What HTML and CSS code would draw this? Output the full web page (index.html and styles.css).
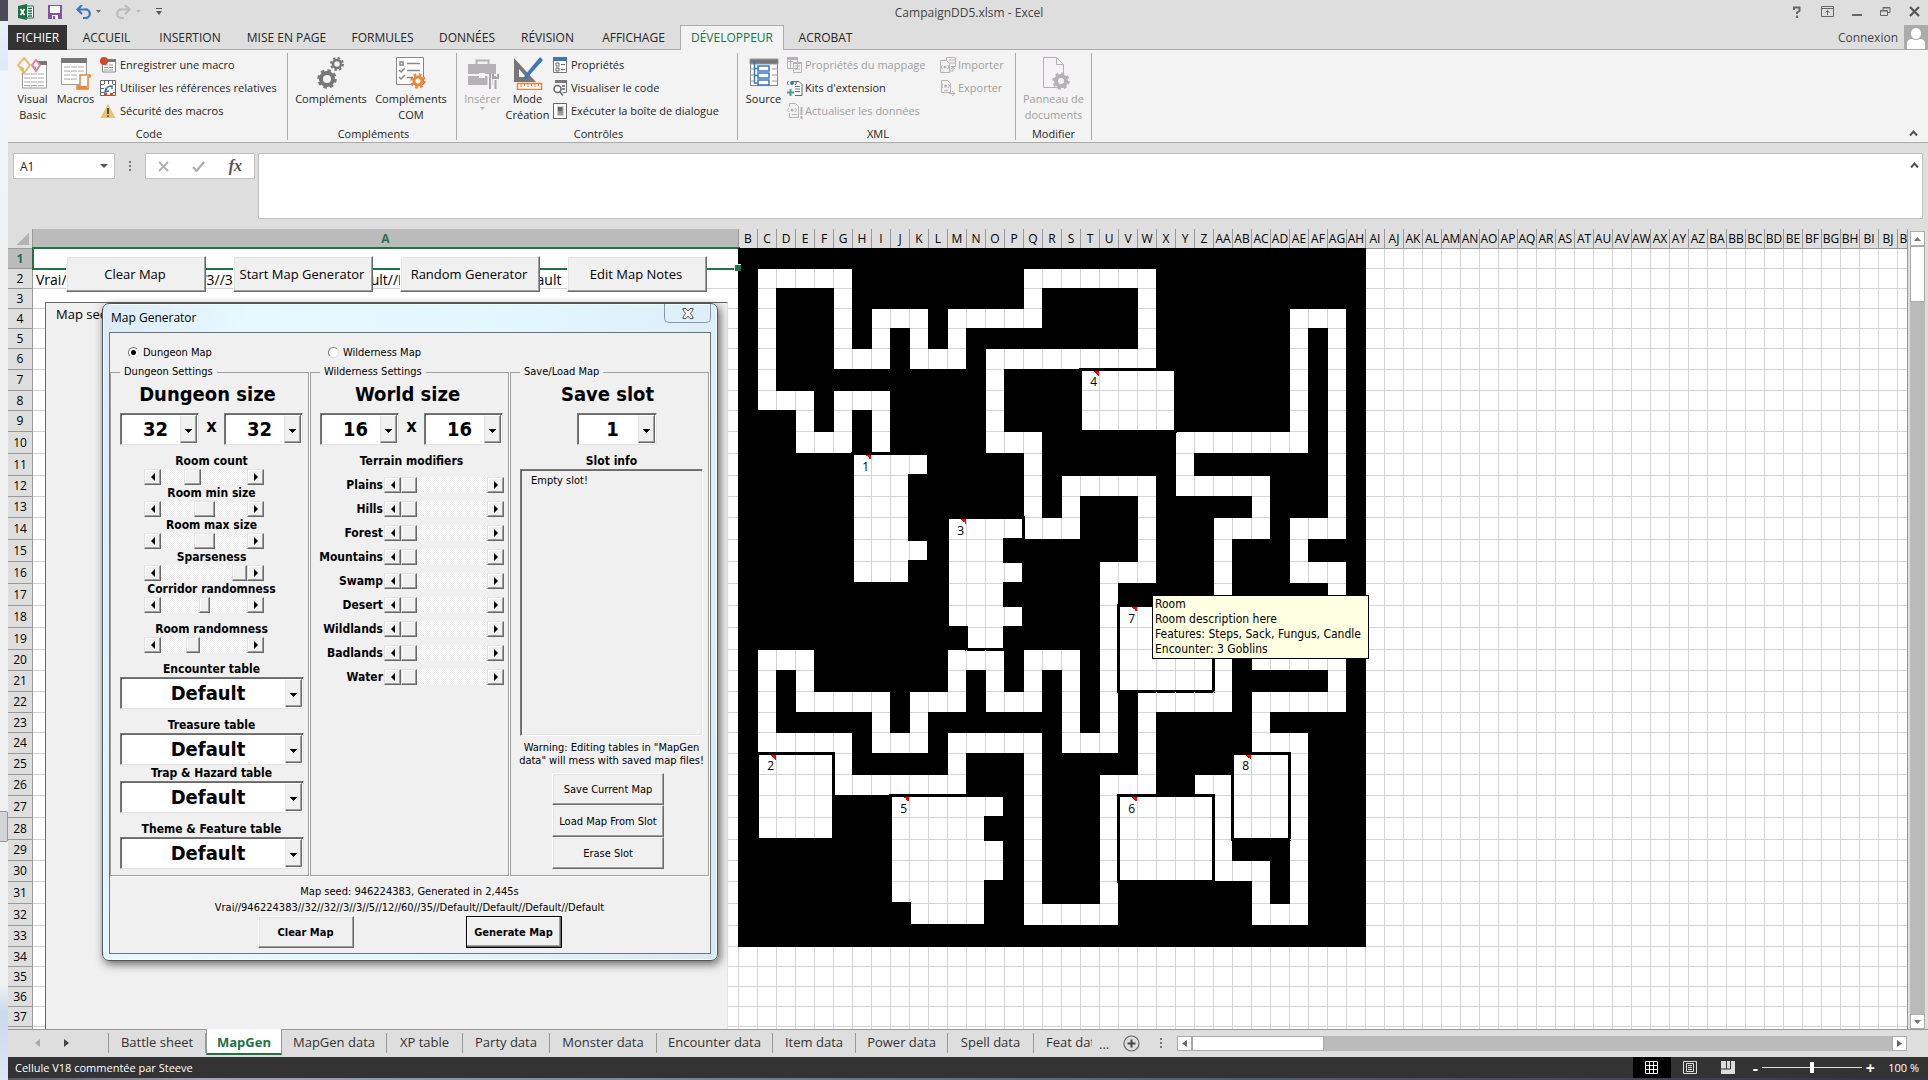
FILE: index.html
```html
<!DOCTYPE html>
<html lang="fr">

<head>
    <meta charset="UTF-8">
    <meta name="viewport" content="width=device-width, initial-scale=1.0">
    <title>CampaignDD5.xlsm - Excel</title>
    <link rel="stylesheet" href="styles.css">
</head>

<body>
    <div class="desktop-edge"><i class="edge-thumb"></i></div>
    <div class="excel">
        <header class="title-bar">
            <div class="quick-access">
                <svg width="16" height="16" viewBox="0 0 16 16"><path d="M0 2l9-2v16l-9-2z" fill="#1e7145"/><path d="M9 2h6.500v12H9" fill="#fff" stroke="#1e7145"/><path d="M10 4.500h4M10 7h4M10 9.500h4M10 12h4" stroke="#1e7145" stroke-width="1.400"/><path d="M2.500 5l4 6M6.500 5l-4 6" stroke="#fff" stroke-width="1.600"/></svg>
                <button class="qa-btn" aria-label="Enregistrer"><svg width="14" height="14" viewBox="0 0 14 14"><path d="M0 0h14v14H0z" fill="#8550a8"/><path d="M2 1h10v7H2zM4 10h6v4H4z" fill="#fff"/><path d="M5 11h2v3H5z" fill="#8550a8"/></svg></button>
                <button class="qa-btn" aria-label="Annuler"><svg width="26" height="14" viewBox="0 0 26 14"><path d="M2 4.500h7a4 4 0 0 1 1 8.500H7M6 0L1.500 4.500 6 9" fill="none" stroke="#3c78b8" stroke-width="2.200"/><path d="M20 5h5l-2.500 3z" fill="#666"/></svg></button>
                <button class="qa-btn" aria-label="Rétablir"><svg width="26" height="14" viewBox="0 0 26 14"><path d="M13 4.500H6A4 4 0 0 0 5 13h3M9 0l4.500 4.500L9 9" fill="none" stroke="#bcbcbc" stroke-width="2.200"/><path d="M20 5h5l-2.500 3z" fill="#bcbcbc"/></svg></button>
                <button class="qa-btn" aria-label="Personnaliser"><svg width="6" height="8" viewBox="0 0 6 8"><path d="M0 .500h6" stroke="#555"/><path d="M0 3h6L3 7z" fill="#555"/></svg></button>
            </div>
            <div class="doc-title">CampaignDD5.xlsm - Excel</div>
            <div class="window-buttons">
                <button aria-label="Aide"><svg width="12" height="12" viewBox="0 0 12 12"><path d="M3 4V1.500h5.500V5L6 6.500V8M6 9.500V12" fill="none" stroke="#666" stroke-width="2"/></svg></button>
                <button aria-label="Options du ruban"><svg width="13" height="11" viewBox="0 0 13 11"><path d="M.500.500h12v10H.500zM.500 2.500h12M6.500 9V4.500M4.500 6.500l2-2 2 2" fill="none" stroke="#666"/></svg></button>
                <button aria-label="Réduire"><svg width="10" height="11" viewBox="0 0 10 11"><path d="M0 8h10v2H0z" fill="#666"/></svg></button>
                <button aria-label="Restaurer"><svg width="11" height="11" viewBox="0 0 11 11"><path d="M.500 4.500h7v5h-7zM3 4V1.500h7v5H8M.500 5h7M3 2h7" fill="none" stroke="#666"/></svg></button>
                <button aria-label="Fermer"><svg width="11" height="11" viewBox="0 0 11 11"><path d="M1 1l9 9M10 1l-9 9" stroke="#555" stroke-width="2.200"/></svg></button>
            </div>
        </header>

        <nav class="ribbon-tabs">
            <a class="file" href="#">FICHIER</a>
            <a href="#">ACCUEIL</a>
            <a href="#">INSERTION</a>
            <a href="#">MISE EN PAGE</a>
            <a href="#">FORMULES</a>
            <a href="#">DONNÉES</a>
            <a href="#">RÉVISION</a>
            <a href="#">AFFICHAGE</a>
            <a class="current" href="#">DÉVELOPPEUR</a>
            <a href="#">ACROBAT</a>
            <div class="account">
                <a href="#">Connexion</a>
                <svg width="24" height="24" viewBox="0 0 24 24"><path d="M0 0h24v24H0z" fill="#ababab"/><ellipse cx="12" cy="8.500" rx="5" ry="5.500" fill="#fff"/><path d="M3 24v-5q0-5 5-5 4 2 8 0 5 0 5 5v5z" fill="#fff"/></svg>
            </div>
        </nav>

        <div class="ribbon">
            <section class="group">
                <div class="group-body">
                    <button class="big w43">
                        <svg width="32" height="32" viewBox="0 0 32 32"><path d="M5.500 8v23h24V6" fill="#fff" stroke="#9a9a9a"/><path d="M20 4h10v4H20z" fill="#777"/><path d="M7 17h21M7 21h21M7 25h21M7 28.500h21" stroke="#aaa" stroke-dasharray="6 1"/><path d="M7 1l6 7-6 8-6-8z" fill="#fff" stroke="#e8bb6c" stroke-width="2"/><path d="M1 8l6 3v6z" fill="#e8bb6c"/><path d="M19 3l4 5-4 6-4-6z" fill="#fff" stroke="#e0809a" stroke-width="2"/><path d="M15 8l4 2v5z" fill="#e0809a"/></svg>
                        Visual<br>Basic
                    </button>
                    <button class="big w43">
                        <svg width="32" height="34" viewBox="0 0 32 34"><path d="M1.500 2.500h25v26h-25z" fill="#fff" stroke="#9a9a9a"/><path d="M1 2h26v5H1z" fill="#777"/><path d="M4 11h20M4 15h20M4 19h14M4 23h14" stroke="#aaa" stroke-dasharray="6 1"/><path d="M20 19h10v2h-2v12H17v-3h3z" fill="#fff" stroke="#e8873a" stroke-width="1.500"/><path d="M17 30h10v3H18z" fill="#e8873a"/></svg>
                        Macros
                    </button>
                    <div class="small-list">
                        <button><svg width="16" height="16" viewBox="0 0 16 16"><path d="M3 3h12.500v12H2.500V6" fill="#fff" stroke="#888"/><path d="M7 2h9v3H7z" fill="#777"/><path d="M4 8h10M4 10.500h10M4 13h10" stroke="#999" stroke-dasharray="4 1"/><circle cx="4" cy="4" r="4" fill="#d24a26"/></svg>Enregistrer une macro</button>
                        <button><svg width="16" height="16" viewBox="0 0 16 16"><path d="M.500.500h15v15H.500zM0 4.500h16M0 8.500h5M0 12.500h16M4.500 0v16M8.500 0v4M12.500 0v16" fill="#fff" stroke="#666"/><path d="M4 4h9v9H4z" fill="#fff"/><path d="M6 8l-1 4 4-1M6 11q0-5 6-5v3" fill="none" stroke="#3c78b8" stroke-width="1.500"/><path d="M4 13h3v3H4zM10 13h3v3h-3z" fill="#d24a26"/></svg>Utiliser les références relatives</button>
                        <button><svg width="16" height="16" viewBox="0 0 16 16"><path d="M8 1l7.500 14H.500z" fill="#ebc06e"/><path d="M8 5v6M8 12.500v1.500" stroke="#333" stroke-width="1.600"/></svg>Sécurité des macros</button>
                    </div>
                </div>
                <h2>Code</h2>
            </section>
            <section class="group">
                <div class="group-body">
                    <button class="big w80">
                        <svg width="32" height="32" viewBox="0 0 32 32" fill="none" stroke="#777"><circle cx="12" cy="22" r="6" stroke-width="4"/><circle cx="12" cy="22" r="8.500" stroke-width="2.500" stroke-dasharray="3.500 3.200"/><circle cx="22" cy="7" r="4" stroke-width="2.500"/><circle cx="22" cy="7" r="6" stroke-width="2" stroke-dasharray="2.400 2.300"/></svg>
                        Compléments
                    </button>
                    <button class="big w80">
                        <svg width="32" height="34" viewBox="0 0 32 34"><path d="M1.500 1.500h27v27h-27z" fill="#fff" stroke="#888"/><path d="M5 6h3v3H5zM12 7.500h13M12 14.500h13M12 21.500h6" fill="none" stroke="#888" stroke-width="1.500"/><path d="M4 14l2 2 4-4M4 21l2 2 4-4" fill="none" stroke="#888" stroke-width="1.500"/><g fill="#fff" stroke="#e8873a"><circle cx="23" cy="25" r="4" stroke-width="3"/><circle cx="23" cy="25" r="6.500" fill="none" stroke-width="2.500" stroke-dasharray="2.600 2.500"/></g></svg>
                        Compléments<br>COM
                    </button>
                </div>
                <h2>Compléments</h2>
            </section>
            <section class="group">
                <div class="group-body">
                    <button class="big w45" disabled>
                        <svg width="32" height="34" viewBox="0 0 32 34"><path d="M9.500 8V4.500h12V8" fill="none" stroke="#b5b2b5" stroke-width="2"/><path d="M1 8h28v10H1zM1 20h28v9H1z" fill="#b5b2b5"/><path d="M12 17h6v5h-6z" fill="#f3f3f3"/><path d="M23 18v15M28.500 22v11" stroke="#f3f3f3" stroke-width="5"/><path d="M23 17v16M28.500 24v9M26 18v4h5v-4" stroke="#a9a6a9" stroke-width="2" fill="none"/></svg>
                        Insérer<br><svg width="5" height="3" viewBox="0 0 5 3"><path d="M0 0h5L2.500 3z" fill="#b5b5b5"/></svg>
                    </button>
                    <button class="big w45">
                        <svg width="32" height="34" viewBox="0 0 32 34"><path d="M2 2v24h22zM7 13l7 8H7z" fill="#777" fill-rule="evenodd"/><path d="M11 25l2-6L28 1l3 3-16 18z" fill="#3c78b8"/><path d="M5.500 27.500h24v6h-24z" fill="#fff" stroke="#e8873a" stroke-width="1.500"/><path d="M9 28v3M12.500 28v2M16 28v3M19.500 28v2M23 28v3M26.500 28v2" stroke="#e8873a"/></svg>
                        Mode<br>Création
                    </button>
                    <div class="small-list">
                        <button><svg width="14" height="16" viewBox="0 0 14 16"><path d="M.500 1.500h13v14H.500z" fill="#fff" stroke="#777"/><path d="M0 0h14v4H0z" fill="#3c78b8"/><path d="M3 6h3v3H3zM3 11h3v3H3zM8 7.500h4M8 12.500h4" fill="none" stroke="#666"/></svg>Propriétés</button>
                        <button><svg width="14" height="16" viewBox="0 0 14 16"><path d="M2.500 1.500h11v11h-4M2 2h11.500" fill="none" stroke="#777"/><path d="M2 0h12v3H2z" fill="#777"/><circle cx="4.500" cy="9" r="3.500" fill="#fff" stroke="#666" stroke-width="1.500"/><path d="M7 12l3 3.500M9 6h3M9 9h3" stroke="#666" stroke-width="1.500"/></svg>Visualiser le code</button>
                        <button><svg width="14" height="16" viewBox="0 0 14 16"><path d="M.500.500h13v15H.500z" fill="#fff" stroke="#666"/><path d="M4.500 3.500h6v9h-6z" fill="#999" stroke="#ccc"/><path d="M5 4h4v4H5z" fill="#666"/></svg>Exécuter la boîte de dialogue</button>
                    </div>
                </div>
                <h2>Contrôles</h2>
            </section>
            <section class="group">
                <div class="group-body">
                    <button class="big w45">
                        <svg width="32" height="32" viewBox="0 0 32 32"><path d="M2.500 3.500h27v25h-27z" fill="#fff" stroke="#888"/><path d="M2 2h28v5H2zM2 12h5M2 18h5M2 24h5M24 12h6M24 18h6M24 24h6" fill="#777" stroke="#999"/><path d="M6.500 4v22H10M6.500 11.500H10M6.500 18.500H10M10 9h11v5H10zM10 16h11v5H10zM10 23h11v5H10z" fill="none" stroke="#3c78b8" stroke-width="1.500"/></svg>
                        Source
                    </button>
                    <div class="small-list xml-list">
                        <button disabled><svg width="16" height="16" viewBox="0 0 16 16"><path d="M.500.500h10v11H.500zM0 4.500h6M3.500 1v10M6.500 5.500h8v10h-8zM8 9h5M8 12h5" fill="#f3f3f3" stroke="#b5b2b5"/><path d="M0 0h11v3H0zM6 5h9v2H6z" fill="#b5b2b5"/></svg>Propriétés du mappage</button>
                        <button><svg width="16" height="16" viewBox="0 0 16 16"><path d="M5 1.500h7l3 3v11H8" fill="#fff" stroke="#666"/><path d="M8 6.500h5M8 9h5M8 11.500h5" stroke="#777"/><circle cx="5" cy="3" r="2" fill="#3c78b8"/><path d="M1.500 1L0 3l1.500 2M8 1l1.500 2L8 5" fill="none" stroke="#666"/><path d="M3.500 9v7M0 12.500h7" stroke="#4aa37e" stroke-width="2"/></svg>Kits d'extension</button>
                        <button disabled><svg width="16" height="16" viewBox="0 0 16 16"><path d="M2.500 4V.500h6l3 3v11h-9V10M5 11.500h5" fill="none" stroke="#b5b2b5"/><circle cx="5" cy="7" r="1.500" fill="#b5b2b5"/><path d="M2 5L.500 7 2 9M8 5l1.500 2L8 9" fill="none" stroke="#b5b2b5"/><path d="M14.500 4v8M14.500 13v3" stroke="#b5b2b5" stroke-width="2"/></svg>Actualiser les données</button>
                    </div>
                    <div class="small-list">
                        <button disabled><svg width="16" height="16" viewBox="0 0 16 16"><path d="M6.500 3V.500h9v9H11M.500 15.500v-12h6l3 3v9zM9 3h6M9 6h6" fill="none" stroke="#b5b2b5"/><circle cx="5" cy="10" r="1.500" fill="#b5b2b5"/><path d="M2.500 8L1 10l1.500 2M7.500 8L9 10l-1.500 2M10 14h3v-4M11 12l2-2 2 2" fill="none" stroke="#b5b2b5"/></svg>Importer</button>
                        <button disabled><svg width="16" height="16" viewBox="0 0 16 16"><path d="M1.500 12.500V.500h6l3 3v9zM4 10.500h4" fill="none" stroke="#b5b2b5"/><circle cx="5.500" cy="6" r="1.500" fill="#b5b2b5"/><path d="M3 4L1.500 6 3 8M8 4l1.500 2L8 8M9 13.500h5M12 11l3 2.500-3 2.500" fill="none" stroke="#b5b2b5"/></svg>Exporter</button>
                    </div>
                </div>
                <h2>XML</h2>
            </section>
            <section class="group last">
                <div class="group-body">
                    <button class="big w75" disabled>
                        <svg width="32" height="34" viewBox="0 0 32 34"><path d="M5.500 31.500v-30h13l7 7v23zM18.500 1.500v7h7" fill="#f6f3f6" stroke="#b5b2b5"/><g fill="#f3f3f3" stroke="#b5b2b5"><circle cx="23" cy="25" r="5" stroke-width="4"/><circle cx="23" cy="25" r="7.500" fill="none" stroke-width="2.500" stroke-dasharray="3 2.900"/></g></svg>
                        Panneau de<br>documents
                    </button>
                </div>
                <h2>Modifier</h2>
            </section>
            <button class="collapse" aria-label="Réduire le ruban"><svg width="9" height="7" viewBox="0 0 9 7"><path d="M1 5.500l3.500-4 3.500 4" fill="none" stroke="#555" stroke-width="2"/></svg></button>
        </div>

        <div class="formula-bar">
            <div class="name-box">
                <input type="text" value="A1" aria-label="Zone Nom">
                <svg width="8" height="4" viewBox="0 0 8 4"><path d="M0 0h8L4 4z" fill="#555"/></svg>
            </div>
            <svg class="dots" width="2" height="11" viewBox="0 0 2 11"><path d="M0 0h2v2H0zM0 4h2v2H0zM0 8h2v2H0z" fill="#777"/></svg>
            <div class="fx-box">
                <button aria-label="Annuler"><svg width="11" height="11" viewBox="0 0 11 11"><path d="M1 1l9 9M10 1l-9 9" stroke="#b0b0b0" stroke-width="1.800"/></svg></button>
                <button aria-label="Entrer"><svg width="13" height="11" viewBox="0 0 13 11"><path d="M1 6l3.500 4L12 1" fill="none" stroke="#b0b0b0" stroke-width="2.200"/></svg></button>
                <button class="fx"><i>fx</i></button>
            </div>
            <div class="formula">
                <textarea aria-label="Barre de formule"></textarea>
                <svg width="9" height="7" viewBox="0 0 9 7"><path d="M1 5.500l3.500-4 3.500 4" fill="none" stroke="#555" stroke-width="2"/></svg>
            </div>
        </div>

        <main class="workspace">
            <div class="sheet">
                <table class="cells"></table>

                <div class="sheet-buttons">
                    <button class="raised">Clear Map</button>
                    <button class="raised">Start Map Generator</button>
                    <button class="raised">Random Generator</button>
                    <button class="raised">Edit Map Notes</button>
                </div>
                <div class="notes-frame">Map seed: 946224383</div>
                <div class="comment">Room<br>Room description here<br>Features: Steps, Sack, Fungus, Candle<br>Encounter: 3 Goblins</div>

                <form class="dialog">
                    <div class="dialog-title">
                        <span>Map Generator</span>
                        <button type="button" class="dialog-close" aria-label="Close"><svg width="12" height="11" viewBox="0 0 12 11"><path d="M1 .500h3l2 2.500 2-2.500h3v1.500L8.500 5.500 11 9v1.500H8L6 8l-2 2.500H1V9l2.500-3.500L1 2z" fill="#fff" stroke="#555"/></svg></button>
                    </div>
                    <div class="dialog-body">
                        <div class="kind">
                            <label><input type="radio" name="kind" checked>Dungeon Map</label>
                            <label><input type="radio" name="kind">Wilderness Map</label>
                        </div>
                        <div class="frames">
                            <fieldset>
                                <legend>Dungeon Settings</legend>
                                <h3>Dungeon size</h3>
                                <div class="size-row">
                                    <div class="combo"><select aria-label="Dungeon width"><option>32</option></select><i></i></div>
                                    <b>x</b>
                                    <div class="combo"><select aria-label="Dungeon height"><option>32</option></select><i></i></div>
                                </div>
                                <label class="caption" for="count">Room count</label>
                                <div class="scroll"><button type="button" class="left" aria-label="less"></button><input id="count" type="range" value="34" style="--thumb:17px"><button type="button" class="right" aria-label="more"></button></div>
                                <label class="caption" for="min">Room min size</label>
                                <div class="scroll"><button type="button" class="left" aria-label="less"></button><input id="min" type="range" value="50" style="--thumb:21px"><button type="button" class="right" aria-label="more"></button></div>
                                <label class="caption" for="max">Room max size</label>
                                <div class="scroll"><button type="button" class="left" aria-label="less"></button><input id="max" type="range" value="50" style="--thumb:21px"><button type="button" class="right" aria-label="more"></button></div>
                                <label class="caption" for="sparse">Sparseness</label>
                                <div class="scroll"><button type="button" class="left" aria-label="less"></button><input id="sparse" type="range" value="100" style="--thumb:15px"><button type="button" class="right" aria-label="more"></button></div>
                                <label class="caption" for="corridor">Corridor randomness</label>
                                <div class="scroll spaced"><button type="button" class="left" aria-label="less"></button><input id="corridor" type="range" value="50" style="--thumb:11px"><button type="button" class="right" aria-label="more"></button></div>
                                <label class="caption" for="random">Room randomness</label>
                                <div class="scroll spaced"><button type="button" class="left" aria-label="less"></button><input id="random" type="range" value="35" style="--thumb:14px"><button type="button" class="right" aria-label="more"></button></div>
                                <label class="caption" for="encounter">Encounter table</label>
                                <div class="combo wide spaced"><select id="encounter"><option>Default</option></select><i></i></div>
                                <label class="caption" for="treasure">Treasure table</label>
                                <div class="combo wide"><select id="treasure"><option>Default</option></select><i></i></div>
                                <label class="caption" for="trap">Trap &amp; Hazard table</label>
                                <div class="combo wide spaced"><select id="trap"><option>Default</option></select><i></i></div>
                                <label class="caption" for="theme">Theme &amp; Feature table</label>
                                <div class="combo wide"><select id="theme"><option>Default</option></select><i></i></div>
                            </fieldset>
                            <fieldset>
                                <legend>Wilderness Settings</legend>
                                <h3>World size</h3>
                                <div class="size-row">
                                    <div class="combo"><select aria-label="World width"><option>16</option></select><i></i></div>
                                    <b>x</b>
                                    <div class="combo"><select aria-label="World height"><option>16</option></select><i></i></div>
                                </div>
                                <div class="caption">Terrain modifiers</div>
                                <div class="terrain"></div>
                            </fieldset>
                            <fieldset>
                                <legend>Save/Load Map</legend>
                                <h3>Save slot</h3>
                                <div class="size-row slot-row">
                                    <div class="combo"><select aria-label="Save slot"><option>1</option></select><i></i></div>
                                </div>
                                <div class="caption">Slot info</div>
                                <div class="slot-info">Empty slot!</div>
                                <p class="warning">Warning: Editing tables in "MapGen<br>data" will mess with saved map files!</p>
                                <div class="slot-buttons">
                                    <button type="button" class="raised">Save Current Map</button>
                                    <button type="button" class="raised">Load Map From Slot</button>
                                    <button type="button" class="raised">Erase Slot</button>
                                </div>
                            </fieldset>
                        </div>
                        <p class="seed">Map seed: 946224383, Generated in 2,445s<br>Vrai//946224383//32//32//3//3//5//12//60//35//Default//Default//Default//Default</p>
                        <div class="dialog-buttons">
                            <button type="button" class="raised">Clear Map</button>
                            <button type="button" class="raised default">Generate Map</button>
                        </div>
                    </div>
                </form>
            </div>
            <div class="v-scroll">
                <button aria-label="Haut"><svg width="7" height="4" viewBox="0 0 7 4"><path d="M0 4h7L3.500 0z" fill="#777"/></svg></button>
                <div class="track"><div class="thumb"></div></div>
                <button aria-label="Bas"><svg width="7" height="4" viewBox="0 0 7 4"><path d="M0 0h7L3.500 4z" fill="#777"/></svg></button>
            </div>
        </main>

        <nav class="sheet-tabs">
            <div class="tab-arrows">
                <svg width="5" height="8" viewBox="0 0 5 8"><path d="M5 0v8L0 4z" fill="#aaa"/></svg>
                <svg width="5" height="8" viewBox="0 0 5 8"><path d="M0 0v8l5-4z" fill="#444"/></svg>
            </div>
            <a href="#">Battle sheet</a>
            <a class="current" href="#">MapGen</a>
            <a href="#">MapGen data</a>
            <a href="#">XP table</a>
            <a href="#">Party data</a>
            <a href="#">Monster data</a>
            <a href="#">Encounter data</a>
            <a href="#">Item data</a>
            <a href="#">Power data</a>
            <a href="#">Spell data</a>
            <a class="cut" href="#">Feat data</a>
            <div class="tab-tools">
                <span>...</span>
                <button aria-label="Nouvelle feuille"><svg width="17" height="17" viewBox="0 0 17 17"><circle cx="8.500" cy="8.500" r="7.500" fill="none" stroke="#666" stroke-width="1.200"/><path d="M8.500 4.500v8M4.500 8.500h8" stroke="#444" stroke-width="2"/></svg></button>
                <svg class="grip" width="2" height="11" viewBox="0 0 2 11"><path d="M0 0h2v2H0zM0 4h2v2H0zM0 8h2v2H0z" fill="#777"/></svg>
            </div>
            <div class="h-scroll">
                <button aria-label="Gauche"><svg width="5" height="7" viewBox="0 0 5 7"><path d="M5 0v7L0 3.500z" fill="#666"/></svg></button>
                <div class="thumb"></div>
                <button aria-label="Droite"><svg width="5" height="7" viewBox="0 0 5 7"><path d="M0 0v7l5-3.500z" fill="#666"/></svg></button>
            </div>
        </nav>

        <footer class="status-bar">
            <span class="message">Cellule V18 commentée par Steeve</span>
            <button class="view on" aria-label="Normal"><svg width="13" height="13" viewBox="0 0 13 13"><path d="M.500.500h12v12H.500zM0 4.500h13M0 8.500h13M4.500 0v13M8.500 0v13" fill="none" stroke="#fff"/></svg></button>
            <button class="view" aria-label="Mise en page"><svg width="14" height="13" viewBox="0 0 14 13"><path d="M.500.500h13v12H.500zM3.500 2.500h7v8h-7zM5 4.500h4M5 6.500h4M5 8.500h4" fill="none" stroke="#ddd"/></svg></button>
            <button class="view" aria-label="Sauts de page"><svg width="14" height="13" viewBox="0 0 14 13"><path d="M0 0h14v13H0z" fill="#ddd"/><path d="M5.500 0v8M9.500 0v8H0" fill="none" stroke="#333"/></svg></button>
            <div class="zoom">
                <span>-</span>
                <input type="range" value="50" aria-label="Zoom">
                <span>+</span>
            </div>
            <span class="percent">100 %</span>
        </footer>
        <div class="taskbar-edge"></div>
    </div>
    <script src="script.js"></script>
</body>

</html>
```

FILE: styles.css
```css
* {
    box-sizing: border-box;
}

body {
    margin: 0;
    height: 100vh;
    display: flex;
    overflow: hidden;
    font-family: "Open Sans", "Noto Sans", sans-serif;
    font-size: 11px;
    color: #262626;
    background: #dedede;
}

button,
input,
select,
textarea {
    font: inherit;
    color: inherit;
    margin: 0;
    padding: 0;
    border: none;
    background: none;
}

a {
    color: inherit;
    text-decoration: none;
}

svg {
    flex: none;
    display: block;
}

.desktop-edge {
    width: 8px;
    flex: none;
    padding-top: 811px;
    background: linear-gradient(#4d4a57 21px, #e6f0fa 21px, #dce9f7 70px, #f2f6fb 71px, #f0f0f0 290px, #f0f0f0 985px, #c8d9ec 1014px, #dbe8f5);
}

.edge-thumb {
    display: block;
    height: 31px;
    border: 1px solid #979797;
    border-left: none;
    border-radius: 0 2px 2px 0;
    background: #d4d4d8;
}

.excel {
    flex: 1;
    min-width: 0;
    display: flex;
    flex-direction: column;
}

/* title bar */

.title-bar {
    height: 25px;
    display: flex;
    align-items: center;
    justify-content: space-between;
    padding: 0 8px 2px 10px;
}

.quick-access,
.window-buttons {
    display: flex;
    align-items: center;
    gap: 14px;
    width: 260px;
}

.window-buttons {
    justify-content: flex-end;
    gap: 18px;
}

.doc-title {
    padding-top: 2px;
    font-size: 12px;
    color: #444;
}

/* ribbon tabs */

.ribbon-tabs {
    display: grid;
    grid-template-columns: 59px 79px 88px 105px 87px 82px 79px 93px 104px 83px 1fr;
    height: 25px;
    line-height: 25px;
    font-size: 12px;
    text-align: center;
    border-bottom: 1px solid #ababab;
}

.ribbon-tabs .file {
    background: #333;
    color: #fff;
    height: 25px;
}

.ribbon-tabs .current {
    height: 25px;
    background: #f3f3f3;
    border: 1px solid #ababab;
    border-bottom: none;
    color: #217346;
    line-height: 23px;
}

.account {
    display: flex;
    justify-content: flex-end;
    gap: 6px;
    color: #444;
}

/* ribbon */

.ribbon {
    height: 93px;
    display: grid;
    grid-template-columns: 280px 169px 281px 278px 76px 1fr;
    padding: 3px 0 2px;
    background: #f3f3f3;
    border-bottom: 1px solid #ababab;
}

.group {
    display: flex;
    flex-direction: column;
    border-right: 1px solid #ababab;
    padding-left: 3px;
}

.group.last {
    padding-left: 0;
}

.group h2 {
    margin: auto 0 0;
    font-size: 11px;
    font-weight: 400;
    line-height: 12px;
    text-align: center;
}

.group-body {
    display: flex;
}

.big {
    display: flex;
    flex-direction: column;
    align-items: center;
    line-height: 16px;
    padding-top: 3px;
    white-space: nowrap;
}

.big > svg:first-child {
    height: 34px;
    margin-bottom: 1px;
}

.big:disabled,
.small-list button:disabled {
    color: #a0a0a0;
}

.w43 {
    width: 43px;
}

.w80 {
    width: 80px;
}

.w45 {
    width: 45px;
}

.w75 {
    width: 75px;
}

.small-list {
    padding-left: 3px;
}

.small-list.xml-list {
    padding-left: 1px;
    width: 151px;
}

.small-list button {
    display: flex;
    align-items: center;
    gap: 4px;
    height: 23px;
    white-space: nowrap;
}

.small-list.xml-list button,
.xml-list + .small-list button {
    gap: 2px;
}

.collapse {
    align-self: end;
    justify-self: end;
    padding: 0 10px 3px;
}

/* formula bar */

.formula-bar {
    height: 86px;
    padding: 10px 5px;
    display: flex;
    align-items: flex-start;
}

.name-box,
.fx-box,
.formula {
    background: #fff;
    border: 1px solid #c0c0c0;
    height: 26px;
    display: flex;
    align-items: center;
}

.name-box {
    width: 102px;
    padding: 0 6px;
}

.name-box input {
    flex: 1;
    min-width: 0;
    font-size: 12px;
}

.dots {
    margin: 8px 14px 0 14px;
}

.fx-box {
    width: 110px;
    justify-content: space-between;
    padding: 0 12px;
    margin-right: 3px;
}

.fx {
    font-family: "Liberation Serif", serif;
    font-size: 16px;
    font-weight: 700;
    line-height: 20px;
    color: #555;
}

.formula {
    flex: 1;
    height: 66px;
    align-items: flex-start;
    padding: 8px 3px;
}

.formula textarea {
    flex: 1;
    height: 48px;
    resize: none;
}

/* sheet */

.workspace {
    flex: 1;
    min-height: 0;
    display: flex;
    border-bottom: 1px solid #999;
}

.sheet {
    flex: 1;
    min-width: 0;
    position: relative;
    overflow: hidden;
    background: #fff;
    border-right: 1px solid #999;
}

.cells {
    table-layout: fixed;
    width: 1300px;
    border-spacing: 0;
    font-size: 12px;
    line-height: 16px;
    color: #000;
}

.cells th {
    padding: 0;
    height: 20px;
    font-weight: 400;
    background: #dedede;
    border: 0 solid #999;
    border-width: 0 1px 1px 0;
    overflow: hidden;
    white-space: nowrap;
}

.cells th.on {
    background: #bbb;
    color: #217346;
    font-weight: 700;
}

.cells .corner {
    background: linear-gradient(135deg, #dedede 50%, #b4b4b4 50%) 8px 4px / 13px 12px no-repeat #dedede;
}

.cells td {
    position: relative;
    padding: 0;
    border: 0 solid #d4d4d4;
    border-width: 0 1px 1px 0;
    text-align: right;
    vertical-align: bottom;
    white-space: nowrap;
}

.cells .text {
    text-align: left;
    padding-left: 3px;
    font-size: 14px;
}

.cells .wall {
    background: #000;
    border-color: #000;
    box-shadow: -1px -1px 0 #000, -1px 0 0 #000, 0 -1px 0 #000;
}

/* room outlines straddle the grid lines */
.cells .room::after {
    content: "";
    position: absolute;
    inset: -2px;
    border: 0 solid #000;
}

.cells .room.t::after { border-top-width: 3px; }
.cells .room.r::after { border-right-width: 3px; }
.cells .room.b::after { border-bottom-width: 3px; }
.cells .room.l::after { border-left-width: 3px; }

.cells .noted {
    padding-right: 2px;
    background: linear-gradient(45deg, transparent 50%, #f00 50%) right 1px / 5px 5px no-repeat;
}

.cells .active::after {
    content: "";
    position: absolute;
    inset: -2px -2px -2px -1px;
    border: 2px solid #217346;
}

.cells .active::before {
    content: "";
    position: absolute;
    z-index: 1;
    right: -3px;
    bottom: -3px;
    width: 6px;
    height: 6px;
    background: #217346;
    border: 1px solid #fff;
    border-width: 1px 0 0 1px;
}

.raised {
    background: #f0f0f0;
    color: #000;
    border: 1px solid;
    border-color: #fff #696969 #696969 #fff;
    box-shadow: inset -1px -1px 0 #a0a0a0, inset 1px 1px 0 #e3e3e3;
}

.sheet-buttons {
    position: absolute;
    z-index: 2;
    top: 27px;
    left: 58px;
    display: flex;
    gap: 27px;
}

.sheet-buttons .raised {
    width: 140px;
    height: 36px;
    padding-right: 2px;
    font-size: 13px;
}

.notes-frame {
    position: absolute;
    z-index: 2;
    top: 73px;
    bottom: 0;
    left: 37px;
    width: 683px;
    padding: 2px 10px;
    font-size: 13px;
    line-height: 18px;
    color: #000;
    background: #f0f0f0;
    border: 1px solid #696969;
    border-right-color: #e3e3e3;
    border-bottom: none;
}

.comment {
    position: absolute;
    z-index: 2;
    top: 366px;
    left: 1144px;
    padding: 1px 7px 1px 2px;
    font-family: "DejaVu Sans Condensed", "DejaVu Sans", sans-serif;
    font-size: 12px;
    line-height: 15px;
    white-space: nowrap;
    color: #000;
    background: #ffffe1;
    border: 1px solid #000;
}

/* map generator dialog */

.dialog {
    position: absolute;
    z-index: 3;
    top: 74px;
    left: 94px;
    width: 616px;
    padding: 0 6px 6px;
    font-family: "DejaVu Sans Condensed", "DejaVu Sans", sans-serif;
    color: #000;
    background: linear-gradient(100deg, #dcebf5, #e6f9ff 20%, #e2f6fe 60%, #d9e9f3);
    border: 1px solid #4c5760;
    border-radius: 7px;
    box-shadow: 2px 3px 10px rgba(0, 0, 0, 0.6), inset 0 0 0 1px #f6fdff;
}

.dialog-title {
    display: flex;
    justify-content: space-between;
    height: 28px;
    padding-left: 2px;
    line-height: 28px;
    font-family: "Open Sans", "Noto Sans", sans-serif;
    font-size: 12px;
}

.dialog-close {
    width: 47px;
    height: 19px;
    display: flex;
    align-items: center;
    justify-content: center;
    border: 1px solid #8b98a1;
    border-top: none;
    border-radius: 0 0 5px 5px;
}

.dialog-body {
    background: #f0f0f0;
    border: 1px solid #6b757c;
    padding: 0 1px 5px 0;
}

.kind {
    display: grid;
    grid-template-columns: 200px 1fr;
    height: 32px;
    padding: 6px 0 0 18px;
}

.kind label {
    display: flex;
    align-items: center;
    gap: 4px;
}

.kind input {
    appearance: none;
    width: 11px;
    height: 11px;
    border: 1px solid;
    border-color: #777 #e3e3e3 #e3e3e3 #777;
    border-radius: 50%;
    background: #fff;
}

.kind input:checked {
    background: radial-gradient(circle, #000 2px, #fff 3px);
}

.frames {
    display: grid;
    grid-template-columns: repeat(3, 1fr);
    gap: 1px;
}

fieldset {
    min-width: 0;
    height: 511px;
    margin: 0;
    padding: 0 5px 0 9px;
    border: 1px solid #a0a0a0;
    box-shadow: 1px 1px 0 #fff;
}

legend {
    padding: 0 4px;
    line-height: 14px;
}

h3 {
    margin: 0 8px 4px 0;
    font-size: 20px;
    line-height: 30px;
    text-align: center;
}

.size-row {
    display: flex;
    justify-content: center;
    align-items: center;
    margin-bottom: 8px;
}

.slot-row {
    padding-left: 10px;
}

.size-row b {
    width: 25px;
    font-size: 18px;
    line-height: 24px;
    padding-bottom: 6px;
    text-align: center;
}

.combo {
    display: grid;
    grid-template-columns: 1fr 17px;
    width: 80px;
    height: 32px;
    padding: 1px;
    background: #fff;
    border: 1px solid;
    border-color: #777 #e3e3e3 #e3e3e3 #777;
    box-shadow: inset 1px 1px 0 #696969;
}

.combo.wide {
    width: 184px;
}

.combo select {
    grid-area: 1 / 1 / 2 / 3;
    appearance: none;
    font-size: 20px;
    font-weight: 700;
    text-align: center;
    text-align-last: center;
    padding-right: 8px;
}

.combo i {
    grid-area: 1 / 2;
    pointer-events: none;
    border: 1px solid;
    border-color: #fff #696969 #696969 #e3e3e3;
    box-shadow: inset -1px -1px 0 #a0a0a0;
    background: linear-gradient(#000, #000) center 13px / 7px 1px no-repeat,
        linear-gradient(#000, #000) center 14px / 5px 1px no-repeat,
        linear-gradient(#000, #000) center 15px / 3px 1px no-repeat,
        linear-gradient(#000, #000) center 16px / 1px 1px no-repeat #f0f0f0;
}

.caption {
    display: block;
    font-size: 12px;
    font-weight: 700;
    line-height: 16px;
    text-align: center;
}

.scroll {
    display: flex;
    width: 120px;
    height: 16px;
    margin-left: 24px;
}

.spaced {
    margin-bottom: 8px;
}

.scroll button {
    width: 17px;
    background: #f0f0f0;
    border: 1px solid;
    border-color: #e3e3e3 #696969 #696969 #e3e3e3;
    box-shadow: inset -1px -1px 0 #a0a0a0, inset 1px 1px 0 #fff;
    display: flex;
    align-items: center;
    justify-content: center;
}

.scroll button::before {
    content: "";
    border: 4px solid transparent;
    border-width: 4px 0;
}

.scroll .left::before {
    border-right: 4px solid #000;
}

.scroll .right::before {
    border-left: 4px solid #000;
}

.scroll input {
    flex: 1;
    min-width: 0;
    appearance: none;
    background: repeating-conic-gradient(#fff 0 25%, #f0f0f0 0 50%) 0 0 / 2px 2px;
}

.scroll input::-webkit-slider-thumb {
    appearance: none;
    width: var(--thumb, 16px);
    height: 16px;
    background: #f0f0f0;
    border: 1px solid;
    border-color: #e3e3e3 #696969 #696969 #e3e3e3;
    box-shadow: inset -1px -1px 0 #a0a0a0, inset 1px 1px 0 #fff;
}

.terrain {
    display: grid;
    gap: 8px;
    margin: 8px -1px 0 -8px;
}

.terrain label {
    display: grid;
    grid-template-columns: 1fr 120px;
    gap: 1px;
    font-size: 12px;
    font-weight: 700;
    line-height: 16px;
    text-align: right;
}

.terrain .scroll {
    margin: 0;
}

.slot-info {
    height: 267px;
    padding: 4px 10px;
    line-height: 14px;
    border: 1px solid;
    border-color: #777 #fff #fff #777;
    box-shadow: inset 1px 1px 0 #696969, inset -1px -1px 0 #e3e3e3;
}

.warning {
    margin: 5px -4px 6px;
    line-height: 13px;
    text-align: center;
    white-space: nowrap;
}

.slot-buttons {
    display: grid;
    width: 112px;
    margin-left: 32px;
}

.slot-buttons .raised {
    height: 32px;
}

.seed {
    margin: 8px 0 0;
    line-height: 16px;
    text-align: center;
}

.dialog-buttons {
    display: flex;
    justify-content: center;
    gap: 112px;
}

.dialog-buttons .raised {
    width: 96px;
    height: 32px;
    font-weight: 700;
}

.dialog-buttons .default {
    border-color: #000;
    box-shadow: inset -1px -1px 0 #696969, inset -2px -2px 0 #a0a0a0, inset 1px 1px 0 #fff;
}

/* scroll bars */

.v-scroll {
    width: 20px;
    padding: 2px 3px 0 2px;
    display: flex;
    flex-direction: column;
}

.v-scroll button,
.h-scroll button,
.thumb {
    background: #fff;
    border: 1px solid #ababab;
}

.v-scroll button,
.h-scroll button {
    width: 15px;
    height: 15px;
    flex: none;
    display: flex;
    align-items: center;
    justify-content: center;
}

.v-scroll .track {
    flex: 1;
    background: #bababa;
}

.v-scroll .thumb {
    height: 56px;
    width: 15px;
}

/* sheet tabs */

.sheet-tabs {
    height: 27px;
    display: grid;
    grid-template-columns: 101px 97px 76px 105px 76px 87px 107px 116px 83px 92px 86px 58px 85px 1fr;
    padding-right: 21px;
    font-size: 13px;
    text-align: center;
    color: #333;
}

.tab-arrows {
    display: flex;
    align-items: center;
    gap: 24px;
    padding-left: 27px;
    border-right: 1px solid #999;
    margin: 3px 0 4px;
}

.sheet-tabs a {
    margin: 3px 0 4px;
    line-height: 18px;
    border-right: 1px solid #999;
    white-space: nowrap;
    overflow: hidden;
}

.sheet-tabs .current {
    margin: -1px 0 2px;
    padding-top: 4px;
    background: #fff;
    color: #217346;
    font-weight: 700;
    border-bottom: 2px solid #217346;
    border-left: 1px solid #999;
}

.sheet-tabs .cut {
    border: none;
    text-align: left;
    margin-left: 12px;
}

.tab-tools {
    display: flex;
    align-items: center;
    gap: 14px;
    padding-left: 7px;
    line-height: 20px;
}

.grip {
    margin-left: 6px;
}

.h-scroll {
    display: flex;
    height: 15px;
    margin-top: 6px;
    background: #bababa;
}

.h-scroll .thumb {
    width: 132px;
    margin-right: auto;
}

/* status bar */

.status-bar {
    height: 21px;
    display: flex;
    align-items: center;
    background: #333;
    color: #fff;
    padding: 0 9px 0 7px;
}

.message {
    flex: 1;
}

.view {
    width: 38px;
    height: 21px;
    display: flex;
    align-items: center;
    justify-content: center;
}

.view.on {
    background: #000;
}

.zoom {
    display: flex;
    align-items: center;
    gap: 4px;
    margin-left: 6px;
    font-size: 16px;
    font-weight: 700;
    line-height: 18px;
}

.zoom input {
    appearance: none;
    width: 100px;
    height: 12px;
    background: linear-gradient(#ddd, #ddd) center / 100% 1px no-repeat;
}

.zoom input::-webkit-slider-thumb {
    appearance: none;
    width: 4px;
    height: 11px;
    background: #fff;
}

.percent {
    width: 44px;
    text-align: right;
}

.taskbar-edge {
    height: 2px;
    background: linear-gradient(90deg, #55585f, #a0a7b3 10%, #6b7280 45%, #2f3540);
}
```

FILE: script.js
```js
const table = document.querySelector(".cells");
const terrain = document.querySelector(".terrain");

const SEED = "Vrai//946224383//32//32//3//3//5//12//60//35//Default//Default//Default//Default";

const rowHeights = [
    20, 20, 20, 20, 20, 21, 21, 20, 21, 22, 22, 21, 21, 22, 22, 22, 22, 22, 22,
    21, 21, 21, 20, 21, 21, 21, 22, 22, 21, 21, 22, 22, 21, 20, 20, 20, 20, 20
];

// open cells of each map row, "from-to:room"
const mapRows = [
    "",
    "1-5 15-21",
    "1 5 15 21",
    "1 5 7-9 11-15 21 29-31",
    "1 5 7 9 11 21 29 31",
    "1 5-7 9-11 13-21 29 31",
    "1 13 18-22:4 29 31",
    "1-3 5-7 13 18-22:4 29 31",
    "3 5 7 13 18-22:4 29 31",
    "3-5 7 13-15 23-29 31",
    "6-9:1 15 23 31",
    "6-8:1 15 17-21 23-27 31",
    "6-8:1 15 17 21 27 31",
    "6-8:1 11-14:3 15-17 21 25-27 29-31",
    "6-9:1 11-13:3 21 25 29",
    "6-8:1 11-14:3 19-21 25 29-31",
    "11-13:3 19 25 31",
    "11-14:3 19 20-24:7 25 31",
    "12-13:3 19 20-24:7 25 31",
    "1-3 11-13 15-17 19 20-24:7 25 27-31",
    "1 3 11 13 15 17 19 20-24:7 25 31",
    "1 3-7 9-11 13-15 17 19 21-25 27-31",
    "1 7 9 17 19 21 27",
    "1-5 7-9 11-15 17-19 21 27-29",
    "1-4:2 5 11 15 21 26-28:8 29",
    "1-4:2 5-11 15 19-21 24-25 26-28:8 29",
    "1-4:2 8-13:5 15 19 20-24:6 25 26-28:8 29",
    "1-4:2 8-12:5 15 19 20-24:6 25 26-28:8 29",
    "8-13:5 15 19 20-24:6 25 29",
    "8-13:5 15 19 20-24:6 25-27 29",
    "8-12:5 15 19 27 29",
    "9-12:5 15-19 27-29",
    ""
];

const MAP_SIZE = 33;
const COLUMNS = 62;

const map = mapRows.map(row => {
    const cells = Array(MAP_SIZE).fill("#");
    row.split(" ").filter(Boolean).forEach(run => {
        const [range, room] = run.split(":");
        const [from, to = from] = range.split("-").map(Number);
        cells.fill(room || ".", from, to + 1);
    });
    return cells;
});

const columnName = index => {
    const letter = String.fromCharCode(65 + index % 26);
    return index < 26 ? letter : String.fromCharCode(64 + Math.floor(index / 26)) + letter;
};

const labelled = new Set();

const createCell = (row, col) => {
    if (row >= MAP_SIZE || col >= MAP_SIZE) return "<td></td>";
    const value = map[row][col];
    if (value === "#") return `<td class="wall"></td>`;
    if (value === ".") return "<td></td>";

    const classes = ["room"];
    if (map[row - 1][col] !== value) classes.push("t");
    if (map[row][col + 1] !== value) classes.push("r");
    if (map[row + 1][col] !== value) classes.push("b");
    if (map[row][col - 1] !== value) classes.push("l");
    let label = "";
    if (!labelled.has(value)) {
        labelled.add(value);
        classes.push("noted");
        label = value;
    }
    return `<td class="${classes.join(" ")}">${label}</td>`;
};

let html = `<colgroup><col style="width:25px"><col style="width:706px"></colgroup><colgroup span="${COLUMNS}" style="width:19px"></colgroup>`;
html += `<tr><th class="corner"></th><th class="on">A</th>`;
for (let col = 0; col < COLUMNS; col++) {
    html += `<th>${columnName(col + 1)}</th>`;
}
html += "</tr>";

rowHeights.forEach((height, row) => {
    html += `<tr style="height:${height}px"><th class="${row === 0 ? "on" : ""}" style="height:${height}px">${row + 1}</th>`;
    html += row === 0 ? `<td class="active"></td>` : `<td class="text">${row === 1 ? SEED : ""}</td>`;
    for (let col = 0; col < COLUMNS; col++) {
        html += createCell(row, col);
    }
    html += "</tr>";
});
table.innerHTML = html;

["Plains", "Hills", "Forest", "Mountains", "Swamp", "Desert", "Wildlands", "Badlands", "Water"].forEach(name => {
    const id = name.toLowerCase();
    terrain.insertAdjacentHTML("beforeend", `<label for="${id}">${name}
        <span class="scroll"><button type="button" class="left" aria-label="less"></button><input id="${id}" type="range" value="0"><button type="button" class="right" aria-label="more"></button></span>
    </label>`);
});
```
